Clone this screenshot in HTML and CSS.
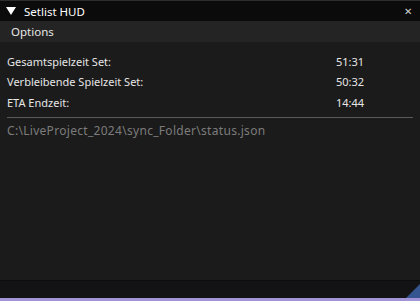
FILE: index.html
```html
<!DOCTYPE html>
<html lang="de">
<head>
    <meta charset="UTF-8">
    <title>Setlist HUD</title>
    <link rel="stylesheet" href="styles.css">
</head>
<body>
    <div class="window">
        <div class="titlebar">
            <span class="collapse"></span>
            <span class="title">Setlist HUD</span>
            <span class="close">&#x2715;</span>
        </div>
        <div class="menubar">
            <span class="menu-item">Options</span>
        </div>
        <div class="content">
            <div class="row"><span class="label">Gesamtspielzeit Set:</span><span class="value">51:31</span></div>
            <div class="row"><span class="label">Verbleibende Spielzeit Set:</span><span class="value">50:32</span></div>
            <div class="row"><span class="label">ETA Endzeit:</span><span class="value">14:44</span></div>
            <hr class="separator">
            <div class="path">C:\LiveProject_2024\sync_Folder\status.json</div>
        </div>
        <div class="footer">
            <span class="grip"></span>
        </div>
    </div>
</body>
</html>
```

FILE: styles.css
```css
html, body {
    margin: 0;
    padding: 0;
    background: #141416;
}
body {
    font-family: "Noto Sans", "Open Sans", sans-serif;
    font-size: 11px;
    color: #e6e6e6;
}
.window {
    width: 420px;
    height: 301px;
    display: flex;
    flex-direction: column;
    border-top: 1px solid #2e2e2e;
    box-sizing: border-box;
}
.titlebar {
    height: 20px;
    background: #0b0b0b;
    display: flex;
    align-items: center;
    padding: 0 6px;
}
.collapse {
    width: 0;
    height: 0;
    border-left: 5px solid transparent;
    border-right: 5px solid transparent;
    border-top: 8px solid #ffffff;
    margin-right: 8px;
}
.title {
    color: #ffffff;
    font-size: 11.5px;
}
.close {
    margin-left: auto;
    margin-right: 2px;
    font-size: 10px;
    color: #cfcfcf;
}
.menubar {
    height: 21px;
    background: #242424;
    display: flex;
    align-items: center;
    padding: 0 11px;
    font-size: 11.5px;
}
.content {
    height: 239px;
    background: #1b1b1b;
    padding: 9px 7px 0 7px;
    box-sizing: border-box;
    border-bottom: 1px solid #0c0c0c;
}
.row {
    display: flex;
    height: 20.5px;
    align-items: center;
}
.label {
    width: 329px;
}
.separator {
    border: none;
    border-top: 1px solid #5a5a5a;
    margin: 4px 0 3px 0;
}
.path {
    color: #7c7c7c;
    font-size: 12px;
    letter-spacing: 0.3px;
    height: 20px;
    display: flex;
    align-items: center;
}
.footer {
    flex: 1;
    background: #131316;
    border-bottom: 3px solid #a294d6;
    position: relative;
}
.grip {
    position: absolute;
    right: 0;
    bottom: 0;
    width: 0;
    height: 0;
    border-left: 14px solid transparent;
    border-bottom: 14px solid #34558f;
}
```
